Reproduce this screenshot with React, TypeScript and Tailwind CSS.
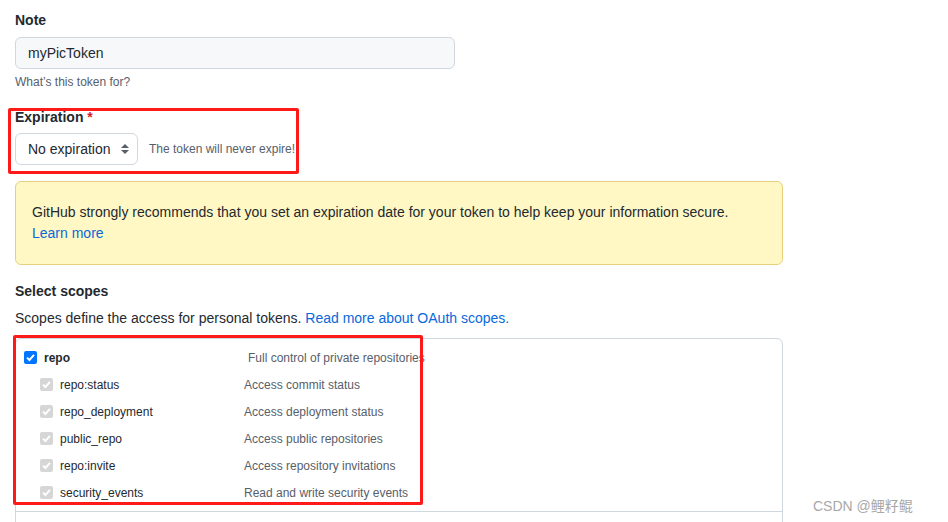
import React from "react";

const font = { fontFamily: '"Segoe UI", "Liberation Sans", "Noto Sans CJK SC", sans-serif' };

function Check({ disabled }: { disabled?: boolean }) {
  return (
    <span
      className={
        "flex h-[13px] w-[13px] shrink-0 items-center justify-center rounded-[2px] " +
        (disabled ? "bg-[#d6d6d6]" : "bg-[#0075ff]")
      }
    >
      <svg width="11" height="11" viewBox="0 0 11 11">
        <path d="M2 5.6 L4.4 8 L9 2.8" fill="none" stroke="white" strokeWidth="1.9" />
      </svg>
    </span>
  );
}

const subs: [string, string][] = [
  ["repo:status", "Access commit status"],
  ["repo_deployment", "Access deployment status"],
  ["public_repo", "Access public repositories"],
  ["repo:invite", "Access repository invitations"],
  ["security_events", "Read and write security events"],
];

export default function App() {
  return (
    <div
      className="relative h-[522px] w-[948px] overflow-hidden bg-white text-[#24292f]"
      style={font}
    >
      <div className="flex flex-col pl-[15px] pt-[10px]">
        <div className="text-[14px] font-semibold leading-[21px]">Note</div>
        <div className="mt-[6px] flex h-[32px] w-[440px] items-center rounded-[6px] border border-[#d0d7de] bg-[#f6f8fa] pl-[12px] text-[14px]">
          myPicToken
        </div>
        <div className="mt-[4px] text-[12px] leading-[18px] text-[#57606a]">What’s this token for?</div>

        <div className="mt-[16px] text-[14px] font-semibold leading-[21px]">
          Expiration <span className="text-[#cf222e]">*</span>
        </div>
        <div className="mt-[5px] flex items-center">
          <div className="flex h-[32px] w-[123px] items-center justify-between rounded-[6px] border border-[#d0d7de] bg-white pl-[12px] pr-[6px] text-[14px]">
            <span>No expiration</span>
            <svg width="12" height="16" viewBox="0 0 12 16">
              <path d="M6 3 L10 7 H2 Z" fill="#57606a" />
              <path d="M6 13 L10 9 H2 Z" fill="#57606a" />
            </svg>
          </div>
          <span className="ml-[11px] text-[12px] text-[#57606a]">The token will never expire!</span>
        </div>

        <div className="mt-[16px] w-[768px] rounded-[6px] border border-[#e7cf7d] bg-[#fff8c5] px-[16px] py-[20px] text-[14px] leading-[21px]">
          <div>GitHub strongly recommends that you set an expiration date for your token to help keep your information secure.</div>
          <div className="text-[#0969da]">Learn more</div>
        </div>

        <div className="mt-[16px] text-[14px] font-semibold leading-[21px]">Select scopes</div>
        <div className="mt-[6px] text-[14px] leading-[21px]">
          Scopes define the access for personal tokens.{" "}
          <span className="text-[#0969da]">Read more about OAuth scopes.</span>
        </div>

        <div className="mt-[9px] w-[768px] rounded-t-[6px] border border-[#d0d7de]">
          <div className="border-b border-[#d0d7de] pt-[5px] pb-[5px]">
            <div className="flex h-[27px] items-center pl-[8px] text-[12px]">
              <Check />
              <span className="ml-[7px] w-[204px] font-semibold">repo</span>
              <span className="text-[#57606a]">Full control of private repositories</span>
            </div>
            {subs.map(([n, d]) => (
              <div key={n} className="flex h-[27px] items-center pl-[24px] text-[12px]">
                <Check disabled />
                <span className="ml-[7px] w-[184px]">{n}</span>
                <span className="text-[#57606a]">{d}</span>
              </div>
            ))}
          </div>
          <div className="h-[40px]" />
        </div>
      </div>

      <div className="pointer-events-none absolute left-[8px] top-[108px] h-[66px] w-[291px] rounded-[2px] border-[3px] border-[#ff1a1a]" />
      <div className="pointer-events-none absolute left-[13px] top-[335px] h-[170px] w-[410px] rounded-[2px] border-[3px] border-[#ff1a1a]" />

      <div className="absolute left-[813px] top-[496px] text-[14px] text-[#a8a8a8]">CSDN @鲤籽鲲</div>
    </div>
  );
}
